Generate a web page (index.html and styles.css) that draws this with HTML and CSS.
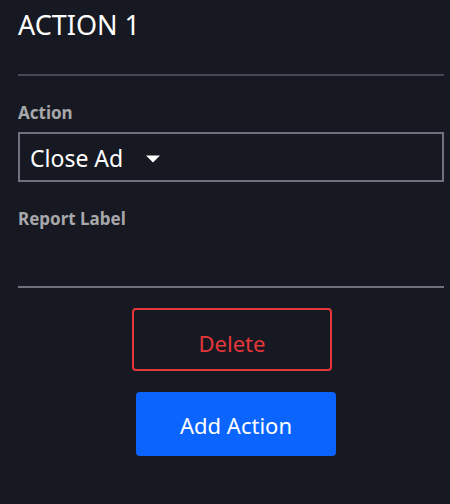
FILE: index.html
```html
<!DOCTYPE html>
<html lang="en">
<head>
    <meta charset="UTF-8">
    <meta name="viewport" content="width=device-width, initial-scale=1">
    <title>Action 1</title>
    <link rel="stylesheet" href="styles.css">
</head>
<body>
    <div class="panel">
        <h1>ACTION 1</h1>
        <hr class="divider">

        <label class="field-label" for="actionSelect">Action</label>
        <div class="select" id="actionSelect">
            <span class="select-value">Close Ad</span>
            <svg class="caret" width="16" height="8" viewBox="0 0 16 8">
                <path d="M1 0.5 L15 0.5 L8 7.5 Z" fill="#ffffff"/>
            </svg>
        </div>

        <label class="field-label second" for="reportLabel">Report Label</label>
        <input class="line-input" id="reportLabel" type="text">

        <div class="buttons">
            <button class="btn btn-delete">Delete</button>
            <button class="btn btn-add">Add Action</button>
        </div>
    </div>
</body>
</html>
```

FILE: styles.css
```css
* { box-sizing: border-box; }
body {
    margin: 0;
    padding: 0;
    background: #171922;
    color: #fff;
    font-family: 'Noto Sans', 'Open Sans', sans-serif;
}
.panel {
    padding: 9px 6px 0 18px;
}
h1 {
    margin: 0;
    font-size: 27px;
    line-height: 32px;
    font-weight: 400;
    color: #fff;
}
.divider {
    margin: 33px 0 0;
    border: none;
    height: 2px;
    background: #464955;
}
.field-label {
    display: block;
    margin-top: 27px;
    font-size: 17px;
    line-height: 20px;
    font-weight: 700;
    color: #a8a8ab;
}
.select {
    display: flex;
    align-items: center;
    margin-top: 9px;
    height: 50px;
    padding: 2px 10px 0;
    border: 2px solid #6f727e;
}
.select-value {
    font-size: 23px;
    line-height: 31px;
    color: #fff;
}
.caret {
    margin-left: 22px;
    margin-top: 1px;
}
.line-input {
    display: block;
    width: 100%;
    height: 51px;
    margin-top: 8px;
    padding: 0;
    background: transparent;
    border: none;
    border-bottom: 2px solid #6f727e;
    color: #fff;
    font-family: inherit;
    font-size: 20px;
    outline: none;
}
.buttons {
    display: flex;
    flex-direction: column;
    align-items: flex-start;
    padding-left: 114px;
    margin-top: 20px;
}
.btn {
    width: 200px;
    font-family: inherit;
    font-size: 22px;
    line-height: 30px;
    cursor: pointer;
}
.btn-delete {
    height: 63px;
    padding: 18px 0 11px;
    background: transparent;
    color: #e5363b;
    border: 2px solid #e5363b;
    border-radius: 4px;
}
.btn-add {
    height: 64px;
    margin-top: 21px;
    margin-left: 4px;
    padding: 18px 0 16px;
    background: #0b65fd;
    color: #fff;
    border: none;
    border-radius: 4px;
}
```
